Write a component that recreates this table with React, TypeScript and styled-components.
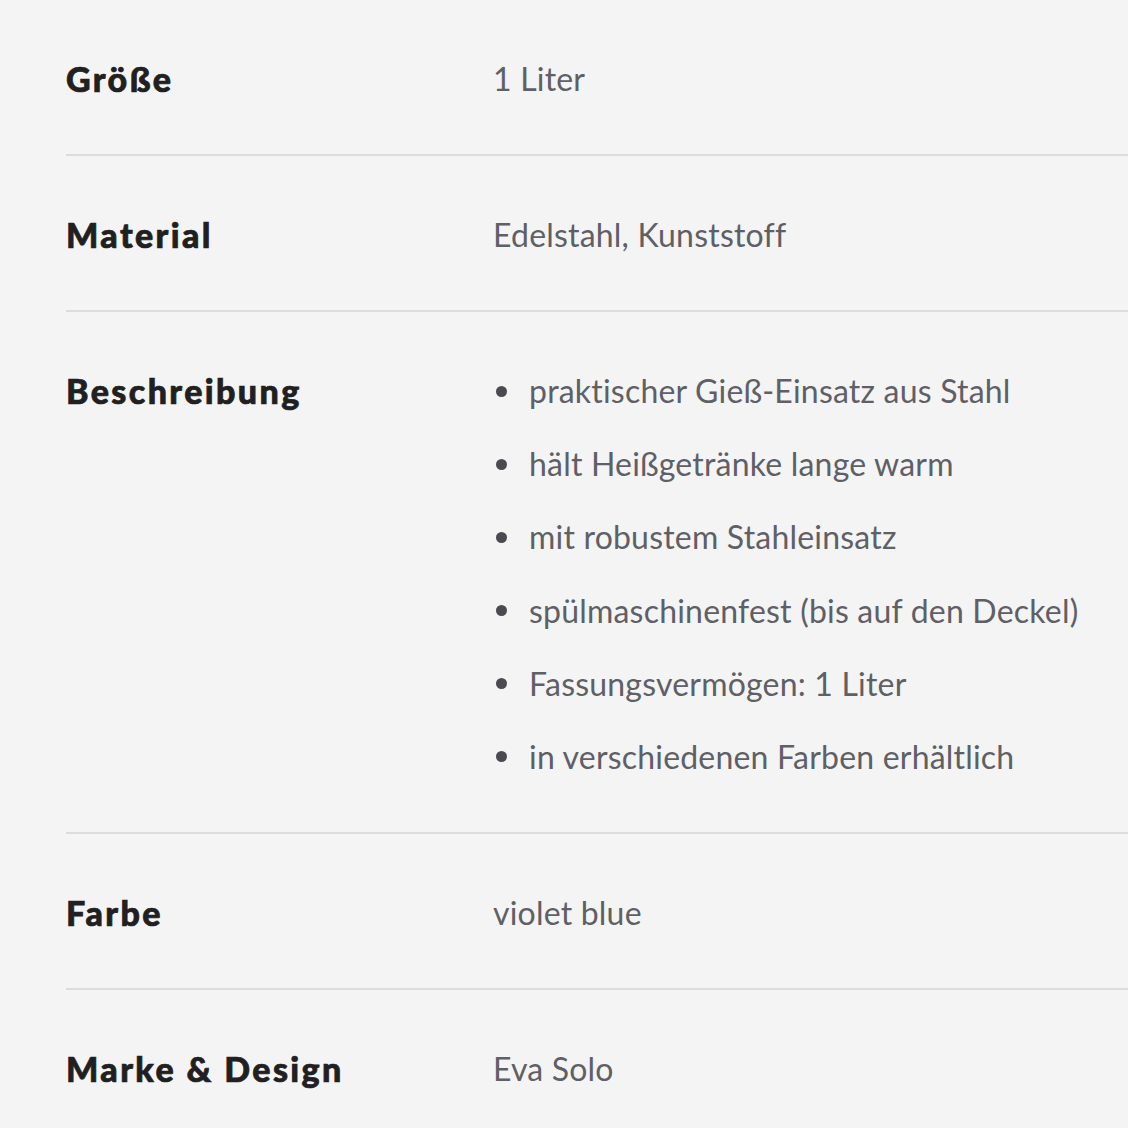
import React from "react";
import styled, { createGlobalStyle } from "styled-components";

const Global = createGlobalStyle`
  html, body { margin: 0; padding: 0; background: #f4f4f4; }
  body { font-family: Lato, "Noto Sans", sans-serif; }
`;

const Table = styled.dl`
  margin: 0;
  padding: 0 0 0 66px;
  display: flex;
  flex-direction: column;
`;

const Row = styled.div`
  display: grid;
  grid-template-columns: 427px 1fr;
  align-items: start;
  padding: 57px 0 53px;
  border-bottom: 2px solid #dcdcdc;
  &:last-child { border-bottom: none; }
`;

const Label = styled.dt`
  margin: 0;
  font-family: Lato, sans-serif;
  font-weight: 900;
  font-size: 34px;
  letter-spacing: 2.4px;
  -webkit-text-stroke: 0.7px #202020;
  line-height: 44px;
  color: #202020;
`;

const Value = styled.dd`
  margin: 0;
  font-family: Lato, sans-serif;
  font-weight: 400;
  font-size: 32px;
  letter-spacing: 0.2px;
  line-height: 44px;
  color: #5f5f66;
`;

const List = styled.ul`
  margin: 0;
  padding: 0;
  list-style: none;
  display: flex;
  flex-direction: column;
  gap: 29.2px;
`;

const Item = styled.li`
  display: flex;
  align-items: center;
  gap: 22px;
  &::before {
    content: "";
    flex: none;
    width: 11px;
    height: 11px;
    margin-left: 3px;
    border-radius: 50%;
    background: #4a4a50;
  }
`;

const bullets = [
  "praktischer Gieß-Einsatz aus Stahl",
  "hält Heißgetränke lange warm",
  "mit robustem Stahleinsatz",
  "spülmaschinenfest (bis auf den Deckel)",
  "Fassungsvermögen: 1 Liter",
  "in verschiedenen Farben erhältlich",
];

export default function App() {
  return (
    <>
      <Global />
      <Table>
        <Row>
          <Label>Größe</Label>
          <Value>1 Liter</Value>
        </Row>
        <Row>
          <Label>Material</Label>
          <Value>Edelstahl, Kunststoff</Value>
        </Row>
        <Row>
          <Label>Beschreibung</Label>
          <Value>
            <List>
              {bullets.map((b) => (
                <Item key={b}>{b}</Item>
              ))}
            </List>
          </Value>
        </Row>
        <Row>
          <Label>Farbe</Label>
          <Value>violet blue</Value>
        </Row>
        <Row>
          <Label>Marke &amp; Design</Label>
          <Value>Eva Solo</Value>
        </Row>
      </Table>
    </>
  );
}
